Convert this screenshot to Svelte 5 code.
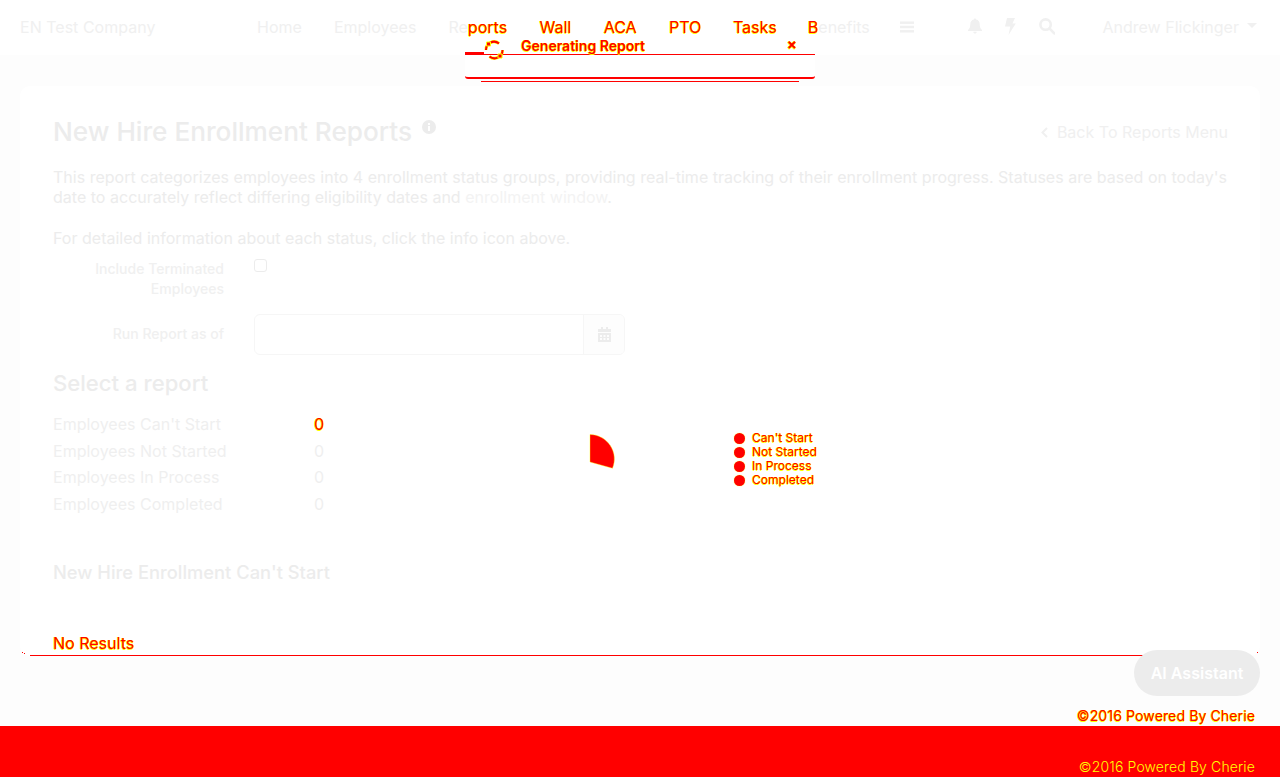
<script>
  const navLinks = [
    { label: "Home" },
    { label: "Employees" },
    { pre: "Re", hot: "ports" },
    { hot: "Wall" },
    { hot: "ACA" },
    { hot: "PTO" },
    { hot: "Tasks" },
    { hot: "B", post: "enefits" }
  ];
  const rows = [
    { label: "Employees Can't Start", hot: true },
    { label: "Employees Not Started" },
    { label: "Employees In Process" },
    { label: "Employees Completed" }
  ];
  const legend = ["Can't Start", "Not Started", "In Process", "Completed"];
</script>

<style>
  :global(body) {
    margin: 0;
    background: #fdfdfd;
    font-family: Inter, "Noto Sans", sans-serif;
    font-size: 16px;
    color: #ececec;
    letter-spacing: 0.015px;
  }
  .hot {
    color: #f00;
    text-shadow: 0.5px 0 0 #ff0, -0.5px 0 0 #ff0, 0 0.5px 0 #ff0, 0 -0.5px 0 #ff0;
  }
  nav {
    height: 55px;
    box-sizing: border-box;
    background: #fff;
    display: flex;
    align-items: center;
    padding: 0 23px 2px 20px;
    color: #f0f0f0;
    line-height: 20px;
  }
  .brand {
    width: 221px;
  }
  .links {
    display: flex;
    align-items: center;
  }
  .links span.link {
    padding: 0 16px;
  }
  .links span.link:nth-child(n + 4) {
    padding-left: 16.4px;
  }
  .links span.link:nth-child(7) {
    padding-left: 15.6px;
  }
  .links span.link:nth-child(8) {
    padding-left: 15px;
  }
  .bars {
    margin-left: 14px;
    width: 14px;
    height: 14px;
  }
  .tools {
    display: flex;
    align-items: center;
    gap: 20px;
    margin-left: 53px;
  }
  .tools svg {
    display: block;
    width: 16px;
    height: 17px;
  }
  .user {
    margin-left: auto;
    display: flex;
    align-items: center;
    gap: 8px;
  }
  .caret {
    width: 0;
    height: 0;
    border-left: 5px solid transparent;
    border-right: 5px solid transparent;
    border-top: 5px solid #f0f0f0;
    margin-top: -3px;
  }

  main {
    padding: 31px 20px 0;
  }
  .card {
    position: relative;
    background: #fff;
    border-radius: 10px;
    padding: 30px 32px 0 33px;
    height: 540px;
  }
  .card::after {
    content: "";
    position: absolute;
    left: 10px;
    right: 10px;
    bottom: 0;
    height: 1px;
    background: #f00;
  }
  .card::before {
    content: "";
    position: absolute;
    left: 2px;
    top: 566px;
    width: 1px;
    height: 1px;
    background: #f00;
    box-shadow: 2px 1px 0 #f00, 1235px 0 0 #f00;
  }
  h1 {
    margin: 0;
    font-size: 26.15px;
    line-height: 32px;
    font-weight: 500;
    color: #ececec;
    display: flex;
    gap: 10px;
  }
  .head {
    display: flex;
    align-items: flex-start;
    justify-content: space-between;
  }
  .info {
    width: 14px;
    height: 14px;
    margin-top: 4px;
  }
  .back {
    display: flex;
    align-items: center;
    gap: 9px;
    margin-top: 6px;
    color: #f0f0f0;
    line-height: 20px;
  }
  p {
    margin: 0;
    line-height: 20px;
  }
  .intro {
    margin-top: 19px;
  }
  .note {
    margin-top: 21px;
  }
  .link-pale {
    color: #f3f3f3;
  }
  .field {
    display: grid;
    grid-template-columns: 171px 1fr;
    column-gap: 30px;
  }
  .field label {
    text-align: right;
    font-size: 14px;
    font-weight: 500;
    line-height: 20px;
    color: #f0f0f0;
  }
  .check-row {
    margin-top: 11px;
  }
  .check {
    width: 11px;
    height: 11px;
    border: 1px solid #ececec;
    border-radius: 3px;
    background: #fff;
  }
  .date-row {
    margin-top: 15px;
    align-items: center;
  }
  .date-row label {
    margin-top: -2px;
  }
  .date {
    width: 371px;
    height: 41px;
    box-sizing: border-box;
    display: flex;
    border: 1px solid #f6f6f6;
    border-radius: 6px;
    overflow: hidden;
  }
  .date div {
    flex: 1;
  }
  .date span {
    width: 40px;
    display: flex;
    align-items: center;
    justify-content: center;
    background: #fdfdfd;
    border-left: 1px solid #f6f6f6;
  }
  .date svg {
    width: 13px;
    height: 15px;
  }
  h2 {
    margin: 13px 0 0;
    font-size: 22.1px;
    line-height: 30px;
    font-weight: 500;
    color: #ececec;
  }
  .report {
    display: flex;
    align-items: flex-start;
    margin-top: 13px;
  }
  .counts {
    width: 280px;
    flex: none;
    color: #efefef;
  }
  .count-row {
    display: grid;
    grid-template-columns: 261px 1fr;
    line-height: 26.5px;
  }
  .pie {
    flex: none;
    width: 60px;
    height: 60px;
    margin: 18px 0 0 227px;
    display: block;
  }
  .legend {
    margin: 20px 0 0 114px;
    font-size: 12px;
    line-height: 14px;
  }
  .legend div {
    display: flex;
    align-items: center;
    gap: 7px;
  }
  .legend i {
    width: 11px;
    height: 11px;
    border-radius: 50%;
    background: #f00;
    box-shadow: 0 0 1px #ff0;
  }
  h3 {
    margin: 43px 0 0;
    font-size: 18.3px;
    line-height: 24px;
    font-weight: 500;
    color: #ececec;
  }
  .empty {
    margin-top: 49px;
  }

  .modal-back {
    position: absolute;
    left: 481px;
    top: 40px;
    width: 318px;
    height: 42px;
    box-sizing: border-box;
    border-bottom: 1px solid #f00;
  }
  .modal {
    position: absolute;
    left: 465px;
    top: 20px;
    width: 350px;
    pointer-events: none;
  }
  .modal-head {
    height: 35px;
    box-sizing: border-box;
    border-bottom: 1px solid #f00;
    display: flex;
    align-items: flex-end;
    font-size: 14px;
    font-weight: 600;
    line-height: 16px;
    padding: 0 18px 0 0;
  }
  .modal-body {
    height: 24px;
    box-sizing: border-box;
    background: #fff;
    border-bottom: 2px solid #f00;
    border-radius: 0 0 3px 3px;
  }
  .stub {
    width: 19px;
    height: 2px;
    background: #f00;
    margin-bottom: 0;
    flex: none;
  }
  .spin {
    width: 21px;
    height: 20px;
    margin: 0 0 -6px 0;
    flex: none;
  }
  .title {
    margin-left: 16px;
    margin-bottom: 0;
  }
  .close {
    margin-left: auto;
    font-weight: 700;
    font-size: 15px;
    margin-bottom: 1px;
  }

  .ai {
    position: absolute;
    left: 1134px;
    top: 650px;
    width: 126px;
    height: 46px;
    border-radius: 23px;
    background: #ececec;
    color: #fff;
    font-size: 16px;
    font-weight: 600;
    display: flex;
    align-items: center;
    justify-content: center;
  }
  footer {
    margin-top: 50px;
  }
  .copy {
    padding-right: 25px;
    text-align: right;
    font-size: 14px;
    line-height: 20px;
    letter-spacing: 0.13px;
  }
  .band {
    background: #f00;
    height: 51px;
    box-sizing: border-box;
    padding: 31px 25px 0 0;
    text-align: right;
    font-size: 14px;
    font-weight: 300;
    line-height: 20px;
    letter-spacing: 0.13px;
    color: #ff0;
    overflow: hidden;
  }
</style>

<nav>
  <div class="brand">EN Test Company</div>
  <div class="links">
    {#each navLinks as item}
      <span class="link">{item.label ?? ""}{item.pre ?? ""}{#if item.hot}<span class="hot">{item.hot}</span>{/if}{item.post ?? ""}</span>
    {/each}
    <svg class="bars" viewBox="0 0 14 14" fill="#f0f0f0"><rect y="1.500" width="14" height="2.400" /><rect y="5.800" width="14" height="2.400" /><rect y="10.100" width="14" height="2.400" /></svg>
  </div>
  <div class="tools">
    <svg viewBox="0 0 16 17" fill="#f0f0f0"><path d="M8 0.500c.7 0 1.100.5 1.100 1.100 2.400.5 3.600 2.400 3.600 4.700 0 3.300 1 4.500 2.300 5.700v.9H1v-.9c1.300-1.200 2.300-2.400 2.300-5.700 0-2.300 1.200-4.200 3.600-4.700C6.900 1 7.300.5 8 .5zM6.300 13.800h3.400C9.700 14.900 9 15.600 8 15.600s-1.700-.7-1.700-1.800z" /></svg>
    <svg viewBox="0 0 16 17" fill="#f0f0f0"><path d="M4 0h8l-2.600 5.400h3.400L5.500 17l1.800-8.500H2z" /></svg>
    <svg viewBox="0 0 16 17" fill="none" stroke="#f0f0f0" stroke-width="2.600"><circle cx="6.600" cy="6.600" r="5.200" /><path d="M10.400 10.400l4.800 5" stroke-linecap="round" /></svg>
  </div>
  <div class="user">Andrew Flickinger <span class="caret"></span></div>
</nav>

<main>
  <section class="card">
    <div class="head">
      <h1>New Hire Enrollment Reports
        <svg class="info" viewBox="0 0 14 14"><circle cx="7" cy="7" r="7" fill="#ececec" /><rect x="6" y="6" width="2" height="5" fill="#fff" /><rect x="6" y="3" width="2" height="2" fill="#fff" /></svg>
      </h1>
      <div class="back">
        <svg width="7" height="11" viewBox="0 0 7 11" fill="none" stroke="#f0f0f0" stroke-width="2"><path d="M6 1L1.500 5.500 6 10" /></svg>
        Back To Reports Menu
      </div>
    </div>
    <p class="intro">This report categorizes employees into 4 enrollment status groups, providing real-time tracking of their enrollment progress. Statuses are based on today's date to accurately reflect differing eligibility dates and <span class="link-pale">enrollment window</span>.</p>
    <p class="note">For detailed information about each status, click the info icon above.</p>

    <div class="field check-row">
      <label for="term">Include Terminated Employees</label>
      <div id="term" class="check"></div>
    </div>
    <div class="field date-row">
      <label for="asof">Run Report as of</label>
      <div id="asof" class="date">
        <div></div>
        <span>
          <svg viewBox="0 0 13 15" fill="#ececec"><rect x="3" width="2" height="3" /><rect x="8" width="2" height="3" /><path d="M0 2h13v3H0zM0 6h13v9H0z" /><path d="M2 8h2v2H2zM5.500 8h2v2h-2zM9 8h2v2H9zM2 11h2v2H2zM5.500 11h2v2h-2zM9 11h2v2H9z" fill="#fdfdfd" /></svg>
        </span>
      </div>
    </div>

    <h2>Select a report</h2>
    <div class="report">
      <div class="counts">
        {#each rows as row}
          <div class="count-row">
            <span>{row.label}</span>
            <span class:hot={row.hot}>0</span>
          </div>
        {/each}
      </div>
      <svg class="pie" viewBox="0 0 60 60"><path d="M30 5.500A24.500 24.500 0 0 1 52.500 39.300L30 33Z" fill="#f00" stroke="#ff0" stroke-width="0.4" /></svg>
      <div class="legend">
        {#each legend as name}
          <div><i></i><span class="hot">{name}</span></div>
        {/each}
      </div>
    </div>

    <h3>New Hire Enrollment Can't Start</h3>
    <p class="empty hot">No Results</p>
  </section>
</main>

<div class="modal-back"></div>
<div class="modal">
  <div class="modal-head">
    <span class="stub"></span>
    <svg class="spin" viewBox="0 0 21 20" fill="none" stroke="#ff0" stroke-width="3"><path d="M2 10a8 8 0 0 1 13-6.500M18.500 10a8 8 0 0 1-13 6.500" /><path d="M2 10a8 8 0 0 1 13-6.500M18.500 10a8 8 0 0 1-13 6.500" stroke="#f00" stroke-width="2" /><path d="M2.500 2h4v4h-4zM14 14h4v4h-4z" stroke="#ff0" stroke-width="1" fill="#f00" /></svg>
    <span class="title hot">Generating Report</span>
    <span class="close hot">×</span>
  </div>
  <div class="modal-body"></div>
</div>

<div class="ai">AI Assistant</div>

<footer>
  <div class="copy hot">©2016 Powered By Cherie</div>
  <div class="band">©2016 Powered By Cherie</div>
</footer>
